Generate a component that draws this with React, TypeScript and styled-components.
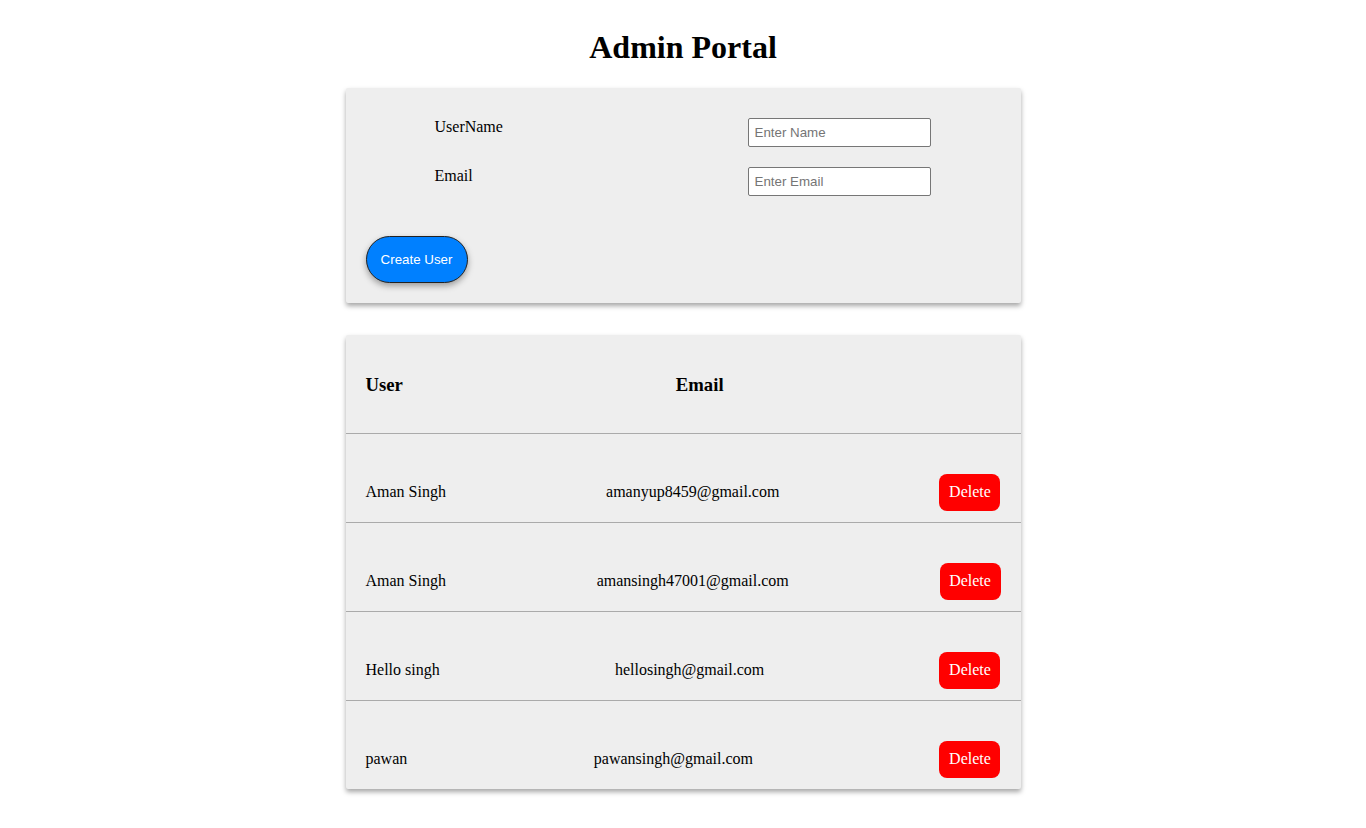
import React from "react";
import styled, { createGlobalStyle } from "styled-components";

const Global = createGlobalStyle`
  body {
    margin: 8px;
    background: #ffffff;
    font-family: "Liberation Serif", "Times New Roman", serif;
    color: #000;
  }
`;

const Title = styled.h1`
  text-align: center;
  font-size: 32px;
  font-weight: bold;
  margin: 21.44px 0;
`;

const Card = styled.div`
  width: 675px;
  margin: 0 auto 32px;
  background: #eeeeee;
  box-shadow: 0 3px 5px rgba(0, 0, 0, 0.35);
  border-radius: 2px;
`;

const FormCard = styled(Card)`
  padding: 30px 20px 20px;
  box-sizing: border-box;
`;

const FieldRow = styled.div`
  display: grid;
  grid-template-columns: 382px 183px;
  margin-bottom: 20px;
`;

const Label = styled.label`
  padding-left: 69px;
  font-size: 16px;
  line-height: 18px;
`;

const Input = styled.input`
  box-sizing: border-box;
  width: 183px;
  height: 29px;
  border: 1px solid #767676;
  border-radius: 2px;
  padding: 0 6px;
  font-family: "Liberation Sans", Arial, sans-serif;
  font-size: 13.33px;
  background: #fff;
  &::placeholder {
    color: #757575;
  }
`;

const CreateButton = styled.button`
  margin-top: 20px;
  width: 102px;
  height: 47px;
  border-radius: 24px;
  border: 1px solid #222;
  background: #0080ff;
  color: #fff;
  font-family: "Liberation Sans", Arial, sans-serif;
  font-size: 13.33px;
  padding: 0;
  box-shadow: 0 3px 6px rgba(0, 0, 0, 0.35);
  cursor: pointer;
`;

const HeaderRow = styled.div`
  display: flex;
  justify-content: space-between;
  padding: 20px 20px 19px;
  border-bottom: 1px solid #aaaaaa;
`;

const HeadCell = styled.h3<{ $w?: number }>`
  font-size: 18.72px;
  margin: 18.72px 0;
  line-height: 21.5px;
  min-width: ${(p) => p.$w ?? 0}px;
`;

const Row = styled.div<{ $first?: boolean }>`
  display: flex;
  justify-content: space-between;
  align-items: center;
  padding: 40px 20px 11px;
  border-top: ${(p) => (p.$first ? "none" : "1px solid #aaaaaa")};
  font-size: 16px;
`;

const Cell = styled.span`
  line-height: 18px;
`;

const DeleteButton = styled.button`
  width: 61px;
  height: 37px;
  border: none;
  border-radius: 8px;
  background: #ff0000;
  color: #fff;
  font-family: "Liberation Serif", "Times New Roman", serif;
  font-size: 16px;
  padding: 0;
  cursor: pointer;
`;

const users = [
  { name: "Aman Singh", email: "amanyup8459@gmail.com" },
  { name: "Aman Singh", email: "amansingh47001@gmail.com" },
  { name: "Hello singh", email: "hellosingh@gmail.com" },
  { name: "pawan", email: "pawansingh@gmail.com" },
];

export default function App() {
  return (
    <>
      <Global />
      <Title>Admin Portal</Title>
      <FormCard>
        <FieldRow>
          <Label>UserName</Label>
          <Input placeholder="Enter Name" />
        </FieldRow>
        <FieldRow>
          <Label>Email</Label>
          <Input placeholder="Enter Email" />
        </FieldRow>
        <CreateButton>Create User</CreateButton>
      </FormCard>
      <Card>
        <HeaderRow>
          <HeadCell>User</HeadCell>
          <HeadCell>Email</HeadCell>
          <HeadCell $w={4} />
        </HeaderRow>
        {users.map((u, i) => (
          <Row key={i} $first={i === 0}>
            <Cell>{u.name}</Cell>
            <Cell>{u.email}</Cell>
            <DeleteButton>Delete</DeleteButton>
          </Row>
        ))}
      </Card>
    </>
  );
}
